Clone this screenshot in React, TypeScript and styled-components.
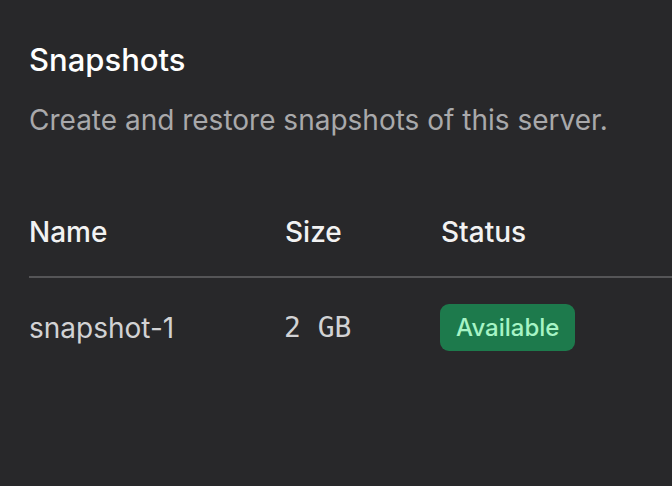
import styled, { createGlobalStyle } from "styled-components";

const GlobalStyle = createGlobalStyle`
    html, body {
        margin: 0;
        background: #28282a;
        font-family: Inter, "Noto Sans", sans-serif;
    }
`

type Snapshot = { name: string; size: string; status: string }

const snapshots: Snapshot[] = [
    { name: "snapshot-1", size: "2 GB", status: "Available" },
]

export default function App() {
    return (
        <>
            <GlobalStyle/>
            <Page>
                <Title>Snapshots</Title>
                <Subtitle>Create and restore snapshots of this server.</Subtitle>
                <Table>
                    <HeadRow>
                        <HeadCell>Name</HeadCell>
                        <HeadCell>Size</HeadCell>
                        <HeadCell>Status</HeadCell>
                    </HeadRow>
                    {snapshots.map(s => (
                        <Row key={s.name}>
                            <Cell>{s.name}</Cell>
                            <Cell mono>{s.size}</Cell>
                            <Cell><Badge>{s.status}</Badge></Cell>
                        </Row>
                    ))}
                </Table>
            </Page>
        </>
    );
}

const Page = styled.main`
    min-height: 486px;
    box-sizing: border-box;
    padding: 41px 0 0 29px;
    overflow: hidden;
`

const Title = styled.h1`
    margin: 0;
    font-size: 31px;
    font-weight: 500;
    line-height: 37px;
    color: #ffffff;
`

const Subtitle = styled.p`
    margin: 25px 0 0;
    font-size: 28px;
    font-weight: 400;
    line-height: 34px;
    color: #a9a9ab;
`

const Table = styled.div`
    margin-top: 78px;
    display: flex;
    flex-direction: column;
`

const HeadRow = styled.div`
    display: grid;
    grid-template-columns: 256px 156px 1fr;
    align-items: center;
    padding-bottom: 27px;
    border-bottom: 2px solid #555557;
`

const HeadCell = styled.div`
    font-size: 28px;
    font-weight: 500;
    line-height: 34px;
    color: #f2f2f2;
`

const Row = styled.div`
    display: grid;
    grid-template-columns: 255px 156px 1fr;
    align-items: center;
    padding-top: 26px;
`

const Cell = styled.div<{ mono?: boolean }>`
    font-size: 28px;
    line-height: 34px;
    font-family: ${p => p.mono ? `"DejaVu Sans Mono", monospace` : `Inter, sans-serif`};
    color: #d2d2d4;
`

const Badge = styled.span`
    display: inline-flex;
    align-items: center;
    height: 47px;
    padding: 0 16px;
    border-radius: 9px;
    background: #1d7a4c;
    color: #a6f4c5;
    font-size: 24px;
    font-weight: 500;
`
